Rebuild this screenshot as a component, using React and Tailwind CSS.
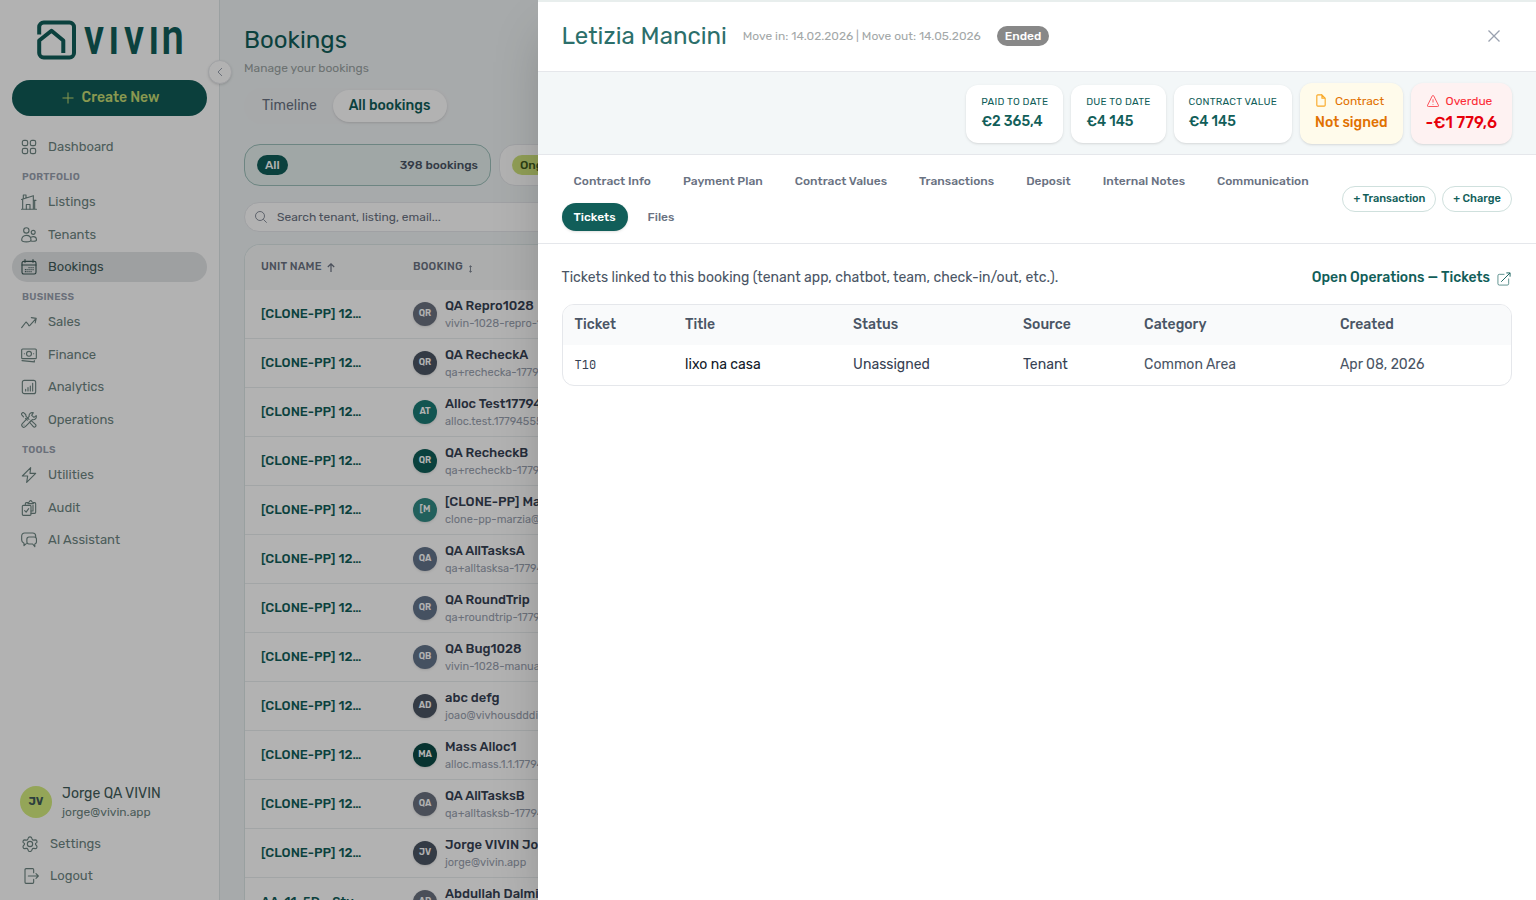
import React, { useState } from "react";

const navSections = [
  { title: null, items: [{ label: "Dashboard", icon: "dashboard" }] },
  {
    title: "PORTFOLIO",
    items: [
      { label: "Listings", icon: "listings" },
      { label: "Tenants", icon: "tenants" },
      { label: "Bookings", icon: "bookings" },
    ],
  },
  {
    title: "BUSINESS",
    items: [
      { label: "Sales", icon: "sales" },
      { label: "Finance", icon: "finance" },
      { label: "Analytics", icon: "analytics" },
      { label: "Operations", icon: "operations" },
    ],
  },
  {
    title: "TOOLS",
    items: [
      { label: "Utilities", icon: "utilities" },
      { label: "Audit", icon: "audit" },
      { label: "AI Assistant", icon: "assistant" },
    ],
  },
];

const bookings = [
  { unit: "[CLONE-PP] 12…", initials: "QR", name: "QA Repro1028", email: "vivin-1028-repro-17", color: "bg-[#6b7280]" },
  { unit: "[CLONE-PP] 12…", initials: "QR", name: "QA RecheckA", email: "qa+rechecka-1779", color: "bg-[#4b5563]" },
  { unit: "[CLONE-PP] 12…", initials: "AT", name: "Alloc Test17794", email: "alloc.test.17794555", color: "bg-[#1b7a74]" },
  { unit: "[CLONE-PP] 12…", initials: "QR", name: "QA RecheckB", email: "qa+recheckb-1779", color: "bg-[#0f5e58]" },
  { unit: "[CLONE-PP] 12…", initials: "[M", name: "[CLONE-PP] Mar", email: "clone-pp-marzia@v", color: "bg-[#328a84]" },
  { unit: "[CLONE-PP] 12…", initials: "QA", name: "QA AllTasksA", email: "qa+alltasksa-17794", color: "bg-[#64748b]" },
  { unit: "[CLONE-PP] 12…", initials: "QR", name: "QA RoundTrip", email: "qa+roundtrip-1779", color: "bg-[#64748b]" },
  { unit: "[CLONE-PP] 12…", initials: "QB", name: "QA Bug1028", email: "vivin-1028-manual", color: "bg-[#64748b]" },
  { unit: "[CLONE-PP] 12…", initials: "AD", name: "abc defg", email: "joao@vivhousdddi", color: "bg-[#4b5563]" },
  { unit: "[CLONE-PP] 12…", initials: "MA", name: "Mass Alloc1", email: "alloc.mass.1.1.17794", color: "bg-[#0b4a45]" },
  { unit: "[CLONE-PP] 12…", initials: "QA", name: "QA AllTasksB", email: "qa+alltasksb-17794", color: "bg-[#6b7280]" },
  { unit: "[CLONE-PP] 12…", initials: "JV", name: "Jorge VIVIN Jor", email: "jorge@vivin.app", color: "bg-[#4b5563]" },
  { unit: "AA-11-5D - Stu…", initials: "AD", name: "Abdullah Dalmi", email: "", color: "bg-[#6b7280]" },
];

const tabs = [
  "Contract Info",
  "Payment Plan",
  "Contract Values",
  "Transactions",
  "Deposit",
  "Internal Notes",
  "Communication",
  "Tickets",
  "Files",
];

const icons = {
  dashboard: (
    <>
      <rect x="2" y="2" width="8" height="8" rx="2.5" />
      <rect x="14" y="2" width="8" height="8" rx="2.5" />
      <rect x="2" y="14" width="8" height="8" rx="2.5" />
      <rect x="14" y="14" width="8" height="8" rx="2.5" />
    </>
  ),
  listings: (
    <>
      <path d="M.8 22.8h22.4M2.5 22.8V7.5M.8 8.2 18.5 2.5v20.3M3.5 7V1.5h4v4M18.5 9.5h4M20.5 9.5v13.3" />
      <path d="M8 22.8v-7h5.5v7" />
    </>
  ),
  tenants: (
    <>
      <circle cx="8" cy="5.2" r="4" />
      <circle cx="18.3" cy="8" r="3" />
      <path d="M8 12.5c-4.2 0-7 3-7 7 0 1.5 3 2.8 7 2.8s7-1.3 7-2.8c0-4-2.8-7-7-7Z" />
      <path d="M15.5 15.2c.8-.5 1.7-.7 2.8-.7 2.9 0 4.9 2.2 4.9 5 0 1.1-2 1.9-4.9 1.9-1.2 0-2.3-.1-3.2-.4" />
    </>
  ),
  bookings: (
    <>
      <rect x="1.5" y="3.5" width="21" height="19" rx="2.5" />
      <path d="M1.5 9h21M6 1v4M18 1v4" />
      <path d="M12 13h.2M15 13h.2M18 13h.2M6.5 16h.2M9 16h.2M12 16h.2M15 16h.2M18 16h.2M6.5 19h.2M9 19h.2M12 19h.2M15 19h.2" />
    </>
  ),
  sales: (
    <path d="M1 20.5 7.5 12l2.5 2.500c.5.5 1 1.500 1.500 2.500.5.8 1.300.7 1.800 0L22.500 7M15.500 5.500l7.300 1-1.500 7" />
  ),
  finance: (
    <>
      <rect x="1" y="3" width="22" height="14.5" rx="1.5" />
      <circle cx="12" cy="10.2" r="3.7" />
      <path d="M5 10.2h.3M18.7 10.2h.3M1.5 20.5l18.5 1.8v-2" />
    </>
  ),
  analytics: (
    <>
      <rect x="2" y="2" width="20" height="20" rx="3" />
      <path d="M7 18v-2.5M10.5 18v-5M14 18v-7.5M17.5 18V6.5" />
    </>
  ),
  operations: (
    <>
      <path d="m9.5 12.2-2.700-2.700M3.800 7.200 1.200 4.200a1.800 1.800 0 0 1 0-2.200l.8-.8a1.800 1.800 0 0 1 2.200 0l2.800 2.500.6 3L12 11" />
      <path d="m15 12.500 7 6.500a2.300 2.300 0 0 1-3.200 3.200L12.500 15" />
      <path d="M22.800 5.500 19.500 8 16 5l2.500-3.800c-3.800-1-7 1.700-6.200 5.400L2 17.500c-2.700 3 1.500 7.200 4.500 4.500L17 11.500c3.700.9 6.700-2.100 5.800-6ZM4.500 19.500h.1" />
    </>
  ),
  utilities: <path d="M14.500 1 2 13.500h8L8.500 23 22 9.500h-8.500L14.500 1Z" />,
  audit: (
    <>
      <rect x="2" y="8" width="13" height="15" rx="1.5" />
      <path d="m5.500 16 2.200 2.200L11.500 13M6.500 8V5.500A1.500 1.500 0 0 1 8 4h2.500M18.500 4H20.500A1.500 1.500 0 0 1 22 5.500v13a1.500 1.500 0 0 1-1.500 1.500H15M10.500 5.500h8c0-2-1.200-2.500-2-2.500-.3-1.500-1-2-2-2s-1.700.5-2 2c-.8 0-2 .5-2 2.500ZM18 8v8.500h-3" />
    </>
  ),
  assistant: (
    <>
      <path d="M8 17.500 4.500 20.500V17C2.500 16 1 14.500 1 12V6c0-2.800 1.700-4.500 4.500-4.500h12C20.300 1.500 22 3.200 22 6v1.500" />
      <path d="M12 7.500h8c2 0 3.200 1.200 3.200 3.200v4c0 2-1 3-2.500 3.300v4L17.500 18H12c-2 0-3.200-1.300-3.200-3.300v-4c0-2 1.200-3.200 3.200-3.200Z" />
    </>
  ),
  settings: (
    <>
      <circle cx="12" cy="12" r="4" />
      <path d="M14.300 2.400 15.300 5a2 2 0 0 0 2.200 1.200l2.500-.4c2 .1 3.100 2.500 2 4.100L20.500 11a2 2 0 0 0 0 2l1.500 1.900c1.100 1.600 0 4-2 4.100l-2.500-.4a2 2 0 0 0-2.200 1.200l-1 2.400c-1 1.500-3.500 1.500-4.600 0l-1-2.400a2 2 0 0 0-2.200-1.200l-2.500.4c-2-.1-3.100-2.500-2-4.100L3.500 13a2 2 0 0 0 0-2L2 9.900c-1.100-1.600 0-4 2-4.100l2.500.4A2 2 0 0 0 8.700 5l1-2.600c1.100-1.500 3.600-1.500 4.600 0Z" />
    </>
  ),
  logout: (
    <>
      <path d="M16 7V2.500A1.500 1.500 0 0 0 14.500 1h-10A1.500 1.500 0 0 0 3 2.500v19A1.500 1.500 0 0 0 4.500 23h10a1.500 1.500 0 0 0 1.500-1.500V17" />
      <path d="M8 12h15M19.500 8.500 23 12l-3.500 3.500" />
    </>
  ),
};

function Icon({ name, className }) {
  return (
    <svg
      viewBox="0 0 24 24"
      fill="none"
      stroke="currentColor"
      strokeWidth="1.7"
      strokeLinecap="round"
      strokeLinejoin="round"
      className={className}
    >
      {icons[name]}
    </svg>
  );
}

function Logo() {
  return (
    <svg viewBox="0 0 150 40" className="ml-[36px] h-[40px] w-[150px] shrink-0" fill="none" stroke="#115e59">
      <path
        d="M3.200 14.500V7A4.500 4.500 0 0 1 7.700 2.500H33.500A4.500 4.500 0 0 1 38 7V33A4.500 4.500 0 0 1 33.500 37.500H7.700A4.500 4.500 0 0 1 3.200 33V20.500L15.500 10.800 27.300 20.500V33"
        strokeWidth="4"
        strokeLinejoin="round"
      />
      <text
        x="60 90.500 110 140.500 157"
        y="34"
        transform="scale(.8 1)"
        stroke="none"
        fill="#115e59"
        fontFamily="Roboto, sans-serif"
        fontWeight="600"
        fontSize="50"
      >
        vıvın
      </text>
    </svg>
  );
}

function NavItem({ item, active }) {
  return (
    <a
      className={`mb-[2px] flex h-[30.65px] items-center gap-[11px] rounded-full pl-[9px] text-[13px] ${
        active ? "bg-[#e3e5e7] text-[#3f5b59]" : "text-[#6d8582]"
      }`}
    >
      <Icon name={item.icon} className="mt-[0.5px] size-4" />
      {item.label}
    </a>
  );
}

function Sidebar() {
  return (
    <aside className="relative flex h-full w-[220px] shrink-0 flex-col border-r border-[#dfe5e7] bg-white px-3 pt-5 pb-2">
      <div className="-ml-3 flex">
        <Logo />
      </div>
      <button className="mt-5 flex h-9 w-[195px] shrink-0 items-center justify-center gap-2 rounded-full bg-[#115b57] pb-[2px] pl-[2px] text-[14px] font-medium text-[#c6dc73]">
        <svg viewBox="0 0 12 12" className="mt-[2px] size-3" fill="none" stroke="currentColor" strokeWidth="1">
          <path d="M6 .5v11M.5 6h11" />
        </svg>
        Create New
      </button>

      <nav className="mt-[15.3px] flex flex-col">
        {navSections.map((section, i) => (
          <div key={i}>
            {section.title && (
              <p className="h-[22.4px] pt-[6px] pl-[10px] text-[10px] leading-[15px] font-semibold tracking-[0.25px] text-gray-400">
                {section.title}
              </p>
            )}
            {section.items.map((item) => (
              <NavItem key={item.label} item={item} active={item.label === "Bookings"} />
            ))}
          </div>
        ))}
      </nav>

      <div className="mt-auto">
        <div className="flex items-start gap-[10px] pl-2">
          <div className="mt-[2px] flex size-8 items-center justify-center rounded-full bg-[#d5ec7f] pt-px text-[11px] font-bold text-[#3f5b59]">
            JV
          </div>
          <div>
            <p className="text-[14px] leading-5 text-[#3f5b59]">Jorge QA VIVIN</p>
            <p className="text-[12px] leading-[17px] text-[#6d8582]">jorge@vivin.app</p>
          </div>
        </div>
        <div className="mt-[7px] text-[13px] text-[#6d8582]">
          <a className="flex h-8 items-center gap-[12px] pl-[10px]">
            <Icon name="settings" className="size-4" />
            Settings
          </a>
          <a className="flex h-8 items-center gap-[11px] pl-[11px]">
            <Icon name="logout" className="size-4" />
            Logout
          </a>
        </div>
      </div>

      <button className="absolute top-[60px] left-[208px] z-10 flex size-6 items-center justify-center rounded-full border border-[#e5e7eb] bg-white text-gray-400 shadow-sm">
        <svg viewBox="0 0 10 10" className="size-2.5" fill="none" stroke="currentColor">
          <path d="M7 1 3 5l4 4" />
        </svg>
      </button>
    </aside>
  );
}

function BookingsPage() {
  return (
    <main className="flex min-w-0 flex-1 flex-col bg-[#eff4f5] pt-6 pl-6">
      <h1 className="text-[24px] leading-8 text-[#115e59]">Bookings</h1>
      <p className="mt-1 text-[12px] leading-4 text-[#9ba3a3]">Manage your bookings</p>

      <div className="mt-[12px] flex h-9 w-[206px] shrink-0 items-center rounded-full bg-[#f0f2f4] p-0.5 text-[14px]">
        <span className="w-[87px] pb-[2px] pl-4 text-gray-500">Timeline</span>
        <span className="flex h-8 w-[114px] items-center justify-center rounded-full bg-white pr-px pb-[2px] font-medium text-[#115e59] shadow-sm">
          All bookings
        </span>
      </div>

      <div className="mt-5 flex h-[42px] shrink-0 gap-2">
        <div className="flex w-[247px] shrink-0 items-center justify-between rounded-2xl border border-[#9cbfba] bg-[#e6efee] px-3">
          <span className="rounded-full bg-[#115e59] px-2 text-[12px] leading-5 font-medium text-white">All</span>
          <span className="text-[12px] font-medium text-gray-600">398 bookings</span>
        </div>
        <div className="flex w-[247px] shrink-0 items-center rounded-2xl border border-gray-200 bg-white px-3">
          <span className="rounded-full bg-[#cfe37c] px-2 text-[12px] leading-5 font-medium text-[#3f5b1c]">Ongoing</span>
        </div>
      </div>

      <div className="mt-4 flex h-[30px] shrink-0 items-center gap-2.5 rounded-full border border-gray-200 bg-white pl-[10px] text-[12px] text-gray-500">
        <svg viewBox="0 0 12 12" className="size-3" fill="none" stroke="currentColor" strokeWidth=".8">
          <circle cx="5" cy="5" r="4.5" />
          <path d="m8.3 8.3 3.4 3.4" />
        </svg>
        Search tenant, listing, email...
      </div>

      <div className="mt-3 overflow-hidden rounded-tl-2xl border-t border-l border-[#dbe5e6] bg-white">
        <div className="flex h-[45px] items-center bg-[#f6f8f8] pl-4 text-[11px] font-medium tracking-[0.2px] text-gray-500">
          <span className="flex w-[152px] items-center gap-[5px]">
            UNIT NAME
            <svg viewBox="0 0 8 9" className="mb-px h-[9px] w-2" fill="none" stroke="currentColor" strokeWidth="1.2">
              <path d="M4 9V1M.8 4 4 .8 7.2 4" />
            </svg>
          </span>
          <span className="flex items-center gap-[5px]">
            BOOKING
            <svg viewBox="0 0 5 9" className="mt-[2px] h-2 w-[5px]" fill="none" stroke="currentColor" strokeWidth=".9">
              <path d="M2.5 1v7M1 2.300 2.500.8 4 2.300M1 6.700l1.500 1.500L4 6.700" />
            </svg>
          </span>
        </div>
        {bookings.map((b, i) => (
          <div key={i} className="flex h-[49px] items-center border-b border-[#e8ecee] pl-4">
            <span className="w-[152px] text-[13px] font-medium text-[#115e59]">{b.unit}</span>
            <span
              className={`flex size-6 shrink-0 items-center justify-center rounded-full text-[9px] font-semibold text-white shadow ${b.color}`}
            >
              {b.initials}
            </span>
            <div className="ml-2 whitespace-nowrap">
              <p className="text-[13px] leading-[18px] font-medium text-gray-700">{b.name}</p>
              <p className="h-4 text-[11px] leading-[18px] text-gray-400">{b.email}</p>
            </div>
          </div>
        ))}
      </div>
    </main>
  );
}

function StatCard({ label, value }) {
  return (
    <div className="mt-[2px] flex h-[58px] flex-col rounded-xl bg-white px-[15px] pt-[10px] text-[#115e59] shadow">
      <p className="text-[10px] leading-[15px] tracking-[0.25px]">{label}</p>
      <p className="mt-[2px] text-[14px] leading-5 font-medium">{value}</p>
    </div>
  );
}

function BookingDrawer() {
  const [activeTab, setActiveTab] = useState("Tickets");

  return (
    <section className="absolute inset-y-0 right-0 flex w-[65%] flex-col border-t-2 border-[#e8eeed] bg-white shadow-2xl">
      <header className="flex h-[70px] items-center border-b border-gray-200 px-6 pb-[2px]">
        <h2 className="text-[24px] leading-8 text-[#2c6f6b]">Letizia Mancini</h2>
        <p className="ml-4 text-[12px] text-[#a3a8a8]">Move in: 14.02.2026 | Move out: 14.05.2026</p>
        <span className="ml-4 rounded-full bg-[#888888] px-2 text-[12px] leading-5 font-medium text-white">Ended</span>
        <button className="mr-3 ml-auto text-gray-400">
          <svg viewBox="0 0 12 12" className="size-3" fill="none" stroke="currentColor" strokeWidth="1.3">
            <path d="m.5.5 11 11M11.5.5l-11 11" />
          </svg>
        </button>
      </header>

      <div className="flex h-[83px] items-center justify-end gap-2 border-b border-gray-200 bg-[#f3f7f8] px-6">
        <StatCard label="PAID TO DATE" value="€2 365,4" />
        <StatCard label="DUE TO DATE" value="€4 145" />
        <StatCard label="CONTRACT VALUE" value="€4 145" />
        <div className="h-[61px] rounded-xl bg-[#fffbeb] px-[15px] pt-[9px] shadow">
          <p className="flex items-center gap-2 text-[12px] leading-[18px] text-[#e17100]">
            <svg viewBox="0 0 12 14" className="h-[13px] w-3" fill="none" stroke="#f9a825" strokeWidth="1.2">
              <path d="M7 1H2.5a1 1 0 0 0-1 1v10a1 1 0 0 0 1 1h7a1 1 0 0 0 1-1V4.5L7 1v3.500h3.500" />
            </svg>
            Contract
          </p>
          <p className="mt-[3px] text-[14px] leading-5 font-medium text-[#e17100]">Not signed</p>
        </div>
        <div className="h-[61px] rounded-xl bg-[#fef2f2] px-[15px] pt-[9px] shadow">
          <p className="flex items-center gap-[7px] pl-px text-[12px] leading-[18px] text-[#fb2c36]">
            <svg viewBox="0 0 12 12" className="size-3" fill="none" stroke="currentColor" strokeWidth=".8">
              <path d="M5.200 1a.9.9 0 0 1 1.600 0l4.600 9.200a.9.9 0 0 1-.8 1.300H1.400a.9.9 0 0 1-.8-1.300L5.200 1ZM6 4.300v3.200M6 9v.7" />
            </svg>
            Overdue
          </p>
          <p className="mt-[1px] text-[16px] leading-6 font-medium text-[#e7000b]">-€1 779,6</p>
        </div>
      </div>

      <div className="flex h-[89px] items-center border-b border-gray-200 px-6">
        <div className="flex w-[770px] flex-wrap gap-2">
          {tabs.map((tab) => (
            <button
              key={tab}
              onClick={() => setActiveTab(tab)}
              className={`h-7 rounded-full px-3 text-[12px] font-medium ${
                activeTab === tab ? "bg-[#115e59] text-white shadow-sm" : "text-gray-500"
              }`}
            >
              {tab}
            </button>
          ))}
        </div>
        <div className="ml-auto flex shrink-0 gap-1.5 text-[11px] font-medium text-[#115e59]">
          <button className="h-[26px] w-[94px] rounded-full border border-[#cfe0dd] pl-px">+ Transaction</button>
          <button className="h-[26px] w-[70px] rounded-full border border-[#cfe0dd]">+ Charge</button>
        </div>
      </div>

      <div className="px-6 pt-6">
        <div className="flex items-center justify-between text-[14px] leading-5">
          <p className="text-gray-600">Tickets linked to this booking (tenant app, chatbot, team, check-in/out, etc.).</p>
          <a className="flex items-center gap-[7px] font-medium text-[#115e59]">
            Open Operations — Tickets
            <svg viewBox="0 0 15 15" className="mt-px mr-px size-[14px]" fill="none" stroke="currentColor" strokeWidth="1">
              <path
                d="M8 2.5H2.5A1.5 1.5 0 0 0 1 4v8.5A1.5 1.5 0 0 0 2.5 14H11a1.5 1.5 0 0 0 1.5-1.5V7"
                opacity=".7"
              />
              <path d="M4.5 10.5 14 1M10 1h4v4" />
            </svg>
          </a>
        </div>

        <div className="mt-4 overflow-hidden rounded-xl border border-gray-200 text-[14px] leading-5 text-gray-600">
          <div className="flex h-10 items-center bg-[#f9fafb] pl-3 font-medium">
            <span className="w-[110.5px]">Ticket</span>
            <span className="w-[168px]">Title</span>
            <span className="w-[170px]">Status</span>
            <span className="w-[121px]">Source</span>
            <span className="w-[195.8px]">Category</span>
            <span>Created</span>
          </div>
          <div className="flex h-10 items-center pl-3">
            <span className="w-[110.5px] font-['JetBrains_Mono','Liberation_Mono',monospace] text-[12px] text-gray-700">
              T10
            </span>
            <span className="w-[168px] text-gray-900">lixo na casa</span>
            <span className="w-[170px] text-gray-700">Unassigned</span>
            <span className="w-[121px] text-gray-700">Tenant</span>
            <span className="w-[195.8px]">Common Area</span>
            <span>Apr 08, 2026</span>
          </div>
        </div>
      </div>
    </section>
  );
}

export default function App() {
  return (
    <div className="relative flex h-screen overflow-hidden font-[Rubik,Inter,sans-serif]">
      <Sidebar />
      <BookingsPage />
      <div className="absolute inset-0 z-20 bg-black/30" />
      <div className="absolute inset-0 z-30">
        <BookingDrawer />
      </div>
    </div>
  );
}
